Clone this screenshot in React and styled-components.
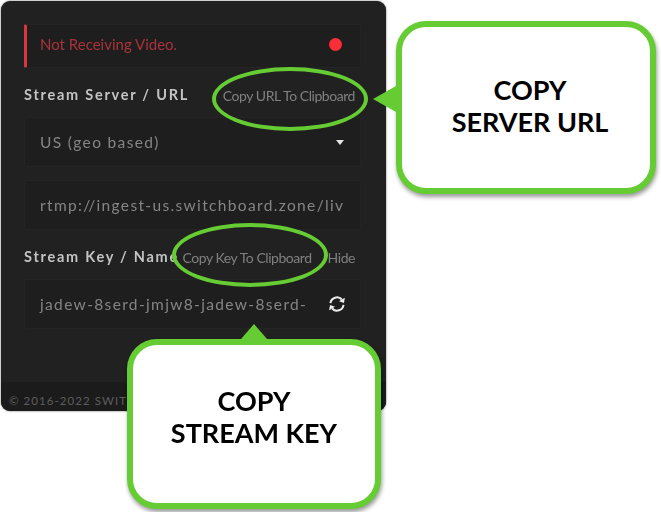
import React from "react";
import styled, { createGlobalStyle, css } from "styled-components";

const GlobalStyle = createGlobalStyle`
  html, body { margin: 0; padding: 0; background: #fff; }
  body { font-family: "Lato", "Liberation Sans", sans-serif; }
`;

const Page = styled.div`
  position: relative;
  width: 661px;
  height: 512px;
  overflow: hidden;
  padding: 1px 0 0 1px;
  box-sizing: border-box;
`;

const Panel = styled.div`
  width: 385px;
  height: 410px;
  display: flex;
  flex-direction: column;
  background: #212121;
  border-radius: 9px;
  box-shadow: 0 0 2px rgba(0, 0, 0, 0.7);
  overflow: hidden;
  filter: blur(0.35px);
`;

const Body = styled.div`
  flex: 1;
  padding: 23px 25px 0 23px;
  display: flex;
  flex-direction: column;
`;

const Field = styled.div`
  height: ${(p) => p.$height || 50}px;
  margin-bottom: ${(p) => p.$gap || 0}px;
  display: flex;
  align-items: center;
  justify-content: space-between;
  box-sizing: border-box;
  padding: 0 ${(p) => p.$right || 16}px 0 15px;
  background: #1e1e1e;
  border: 1px solid #242424;
  border-radius: 2px;
  font-size: 15.5px;
  letter-spacing: 1.35px;
  color: #858585;
  white-space: nowrap;
  overflow: hidden;
`;

const Status = styled(Field)`
  border-left: 3px solid #d9363e;
  padding: 0 16px 4px 13px;
  letter-spacing: 0;
  font-size: 15px;
  color: #a8333a;
`;

const Dot = styled.span`
  width: 13px;
  height: 13px;
  margin-right: 2px;
  border-radius: 50%;
  background: #fb2d36;
`;

const LabelRow = styled.div`
  height: 49px;
  display: flex;
  align-items: center;
  justify-content: space-between;
  padding-top: 5px;
  box-sizing: border-box;
`;

const Label = styled.span`
  font-size: 14.5px;
  font-weight: 700;
  letter-spacing: 1.75px;
  color: #c4c4c4;
  margin-top: -2px;
`;

const Actions = styled.div`
  display: flex;
  gap: 16px;
  margin-top: 1px;
  margin-right: 6px;
`;

const Action = styled.span`
  font-size: 14px;
  letter-spacing: -0.45px;
  color: #808080;
  white-space: nowrap;
`;

const Caret = styled.span`
  width: 0;
  height: 0;
  border-left: 4.5px solid transparent;
  border-right: 4.5px solid transparent;
  border-top: 5px solid #e6e6e6;
`;

const Footer = styled.div`
  height: 29px;
  padding: 6px 0 0 8px;
  box-sizing: border-box;
  background: #1b1b1b;
  font-size: 11.5px;
  letter-spacing: 1.05px;
  line-height: 26px;
  color: #5e5e5e;
  white-space: nowrap;
`;

const Ring = styled.div`
  position: absolute;
  box-sizing: border-box;
  left: ${(p) => p.$left}px;
  top: ${(p) => p.$top}px;
  width: 156px;
  height: 64px;
  border: 4.5px solid #66cc33;
  border-radius: 50%;
`;

const Callout = styled.div`
  position: absolute;
  box-sizing: border-box;
  left: ${(p) => p.$left}px;
  top: ${(p) => p.$top}px;
  width: ${(p) => p.$width}px;
  height: ${(p) => p.$height}px;
  padding: 0 0 ${(p) => p.$lift}px ${(p) => p.$shift}px;
  display: flex;
  align-items: center;
  justify-content: center;
  text-align: center;
  background: #fff;
  border: 6.5px solid #66cc33;
  border-radius: 30px;
  box-shadow: 1px 3px 4px rgba(0, 0, 0, 0.4);
  font-size: 27px;
  font-weight: 700;
  line-height: 32px;
  color: #000;
  &::before {
    content: "";
    position: absolute;
    width: 0;
    height: 0;
    ${(p) =>
      p.$arrow === "left"
        ? css`
            left: -29.5px;
            top: 59px;
            border-top: 13px solid transparent;
            border-bottom: 13px solid transparent;
            border-right: 23px solid #66cc33;
          `
        : css`
            left: 108px;
            top: -21px;
            border-left: 13px solid transparent;
            border-right: 13px solid transparent;
            border-bottom: 15px solid #66cc33;
          `}
  }
`;

const SyncIcon = () => (
  <svg width="20" height="20" viewBox="0 0 20 20" fill="none" aria-hidden="true">
    <g transform="rotate(12 10 10)">
      <path d="M3.4 10.5A6.6 6.6 0 0 1 13.8 4.6" stroke="#eee" strokeWidth="2" />
      <path d="M16.6 9.5A6.6 6.6 0 0 1 6.2 15.4" stroke="#eee" strokeWidth="2" />
      <path d="M16.4 2.2L16.6 7.6L11.4 7Z" fill="#eee" />
      <path d="M3.6 17.8L3.4 12.4L8.6 13Z" fill="#eee" />
    </g>
  </svg>
);

export default function App() {
  return (
    <Page>
      <GlobalStyle />
      <Panel>
        <Body>
          <Status $height={44}>
            Not Receiving Video.
            <Dot />
          </Status>
          <LabelRow>
            <Label>Stream Server / URL</Label>
            <Actions>
              <Action>Copy URL To Clipboard</Action>
            </Actions>
          </LabelRow>
          <Field $gap={13}>
            US (geo based)
            <Caret />
          </Field>
          <Field>rtmp://ingest-us.switchboard.zone/liv</Field>
          <LabelRow>
            <Label>Stream Key / Name</Label>
            <Actions>
              <Action>Copy Key To Clipboard</Action>
              <Action>Hide</Action>
            </Actions>
          </LabelRow>
          <Field $right={13}>
            jadew-8serd-jmjw8-jadew-8serd-
            <SyncIcon />
          </Field>
        </Body>
        <Footer>© 2016-2022 SWITCHBOARD LIVE</Footer>
      </Panel>
      <Ring $left={212} $top={67} />
      <Ring $left={172} $top={223} />
      <Callout $left={396} $top={21} $width={260} $height={173} $lift={3} $shift={8} $arrow="left">
        <span>
          COPY
          <br />
          SERVER URL
        </span>
      </Callout>
      <Callout $left={127} $top={339} $width={254} $height={170} $lift={15} $shift={0} $arrow="up">
        <span>
          COPY
          <br />
          STREAM KEY
        </span>
      </Callout>
    </Page>
  );
}
